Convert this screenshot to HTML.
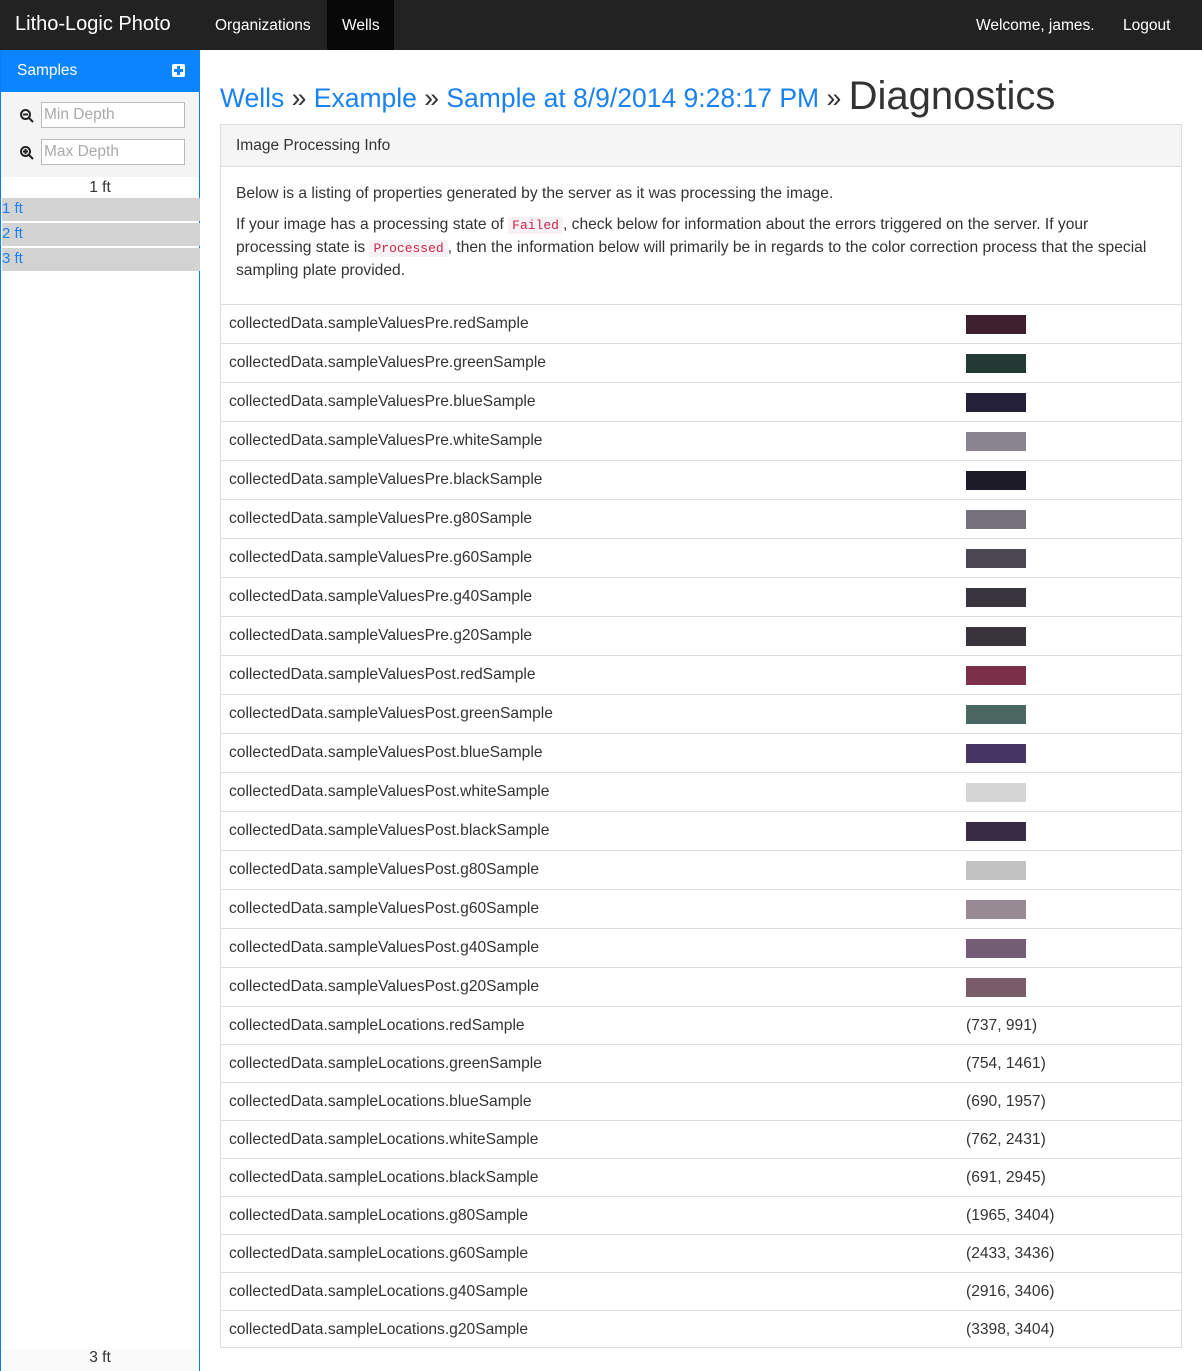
<!DOCTYPE html>
<html><head><meta charset="utf-8"><style>
*{box-sizing:border-box;margin:0;padding:0}
body{width:1202px;height:1371px;overflow:hidden;font-family:"Liberation Sans",sans-serif;color:#333;background:#fff;position:relative;font-size:15px}
.nav{position:absolute;left:0;top:0;width:1202px;height:50px;background:#222;color:#fff}
.nav span{position:absolute;top:17px;font-size:15.5px}
.side{position:absolute;left:0;top:50px;width:200px;height:1321px;border:1px solid #0a7cf5;border-top:none}
.sh{position:absolute;left:0;top:0;width:199px;height:42px;background:#0a84ff;color:#fff;font-size:15.5px}
.box{position:absolute;left:0;top:42px;width:198px;height:85px;background:#f4f4f4}
.inp{position:absolute;left:40px;width:144px;height:26px;border:1px solid #bbb;background:#fff;color:#aaa;font-size:15.5px;padding:3px 2px}
.it{position:absolute;left:1px;width:198px;height:23px;background:#d3d3d3;color:#1a82f0;font-size:15px;padding-top:2px}
.h1{position:absolute;left:220px;top:72px;font-size:26.5px;color:#1a82f0;white-space:nowrap}
.panel{position:absolute;left:220px;top:124px;width:962px;height:1224px;border:1px solid #ddd}
.ph{height:42px;background:#f5f5f5;border-bottom:1px solid #ddd;padding:12px 15px;font-size:15.5px}
.pb{padding:16px 15px;font-size:15.6px;line-height:22px}
code{font-family:"Liberation Mono",monospace;font-size:13px;color:#c7254e;background:#f9f2f4;padding:1px 4px}
.row{position:absolute;left:0;width:960px;border-top:1px solid #ddd;font-size:15.6px}
.row .k{position:absolute;left:8px;top:10px}
.row .v{position:absolute;left:745px;top:10px}
.row .sw{position:absolute;left:745px;top:10px;width:60px;height:19px}
</style></head><body>
<div class="nav">
<span style="left:15px;font-size:20px;top:13px">Litho-Logic Photo</span>
<span style="left:215px">Organizations</span>
<div style="position:absolute;left:327px;top:0;width:67px;height:50px;background:#080808"></div>
<span style="left:342px">Wells</span>
<span style="left:976px">Welcome, james.</span>
<span style="left:1123px">Logout</span>
</div>
<div class="side">
<div class="sh"><span style="position:absolute;left:16px;top:12px">Samples</span>
<div style="position:absolute;left:171px;top:14px;width:13px;height:13px;background:#fff;border-radius:2px"><div style="position:absolute;left:5px;top:2px;width:3px;height:9px;background:#0a84ff"></div><div style="position:absolute;left:2px;top:5px;width:9px;height:3px;background:#0a84ff"></div></div></div>
<div class="box">
<svg style="position:absolute;left:18px;top:16px" width="16" height="16" viewBox="0 0 16 16"><circle cx="6.5" cy="6.5" r="4.5" fill="none" stroke="#222" stroke-width="2"/><path d="M10 10l4 4M4 6.5h5" stroke="#222" stroke-width="2"/></svg>
<div class="inp" style="top:10px">Min Depth</div>
<svg style="position:absolute;left:18px;top:53px" width="16" height="16" viewBox="0 0 16 16"><circle cx="6.5" cy="6.5" r="4.5" fill="none" stroke="#222" stroke-width="2"/><path d="M10 10l4 4M4 6.5h5M6.5 4v5" stroke="#222" stroke-width="2"/></svg>
<div class="inp" style="top:47px">Max Depth</div>
</div>
<div style="position:absolute;left:0;top:129px;width:198px;text-align:center;font-size:15.5px">1 ft</div>
<div class="it" style="top:148px">1 ft</div>
<div class="it" style="top:173px">2 ft</div>
<div class="it" style="top:198px">3 ft</div>
<div style="position:absolute;left:0;top:1299px;width:198px;height:22px;background:#fafafa;text-align:center;font-size:15.5px">3 ft</div>
</div>
<div class="h1">Wells <span style="color:#333">»</span> Example <span style="color:#333">»</span> Sample at 8/9/2014 9:28:17 PM <span style="color:#333">»</span> <span style="color:#333;font-size:40px;position:relative;top:2px">Diagnostics</span></div>
<div class="panel">
<div class="ph">Image Processing Info</div>
<div class="pb"><p style="margin-bottom:9px">Below is a listing of properties generated by the server as it was processing the image.</p>
<p>If your image has a processing state of <code>Failed</code>, check below for information about the errors triggered on the server. If your<br>processing state is <code>Processed</code>, then the information below will primarily be in regards to the color correction process that the special sampling plate provided.</p></div>
<div class="row" style="top:179px;height:39px"><span class="k">collectedData.sampleValuesPre.redSample</span><div class="sw" style="background:#3d1f2e"></div></div>
<div class="row" style="top:218px;height:39px"><span class="k">collectedData.sampleValuesPre.greenSample</span><div class="sw" style="background:#233a34"></div></div>
<div class="row" style="top:257px;height:39px"><span class="k">collectedData.sampleValuesPre.blueSample</span><div class="sw" style="background:#25213a"></div></div>
<div class="row" style="top:296px;height:39px"><span class="k">collectedData.sampleValuesPre.whiteSample</span><div class="sw" style="background:#8a8490"></div></div>
<div class="row" style="top:335px;height:39px"><span class="k">collectedData.sampleValuesPre.blackSample</span><div class="sw" style="background:#1e1b29"></div></div>
<div class="row" style="top:374px;height:39px"><span class="k">collectedData.sampleValuesPre.g80Sample</span><div class="sw" style="background:#77717b"></div></div>
<div class="row" style="top:413px;height:39px"><span class="k">collectedData.sampleValuesPre.g60Sample</span><div class="sw" style="background:#4c4851"></div></div>
<div class="row" style="top:452px;height:39px"><span class="k">collectedData.sampleValuesPre.g40Sample</span><div class="sw" style="background:#38353f"></div></div>
<div class="row" style="top:491px;height:39px"><span class="k">collectedData.sampleValuesPre.g20Sample</span><div class="sw" style="background:#39343b"></div></div>
<div class="row" style="top:530px;height:39px"><span class="k">collectedData.sampleValuesPost.redSample</span><div class="sw" style="background:#7b2f48"></div></div>
<div class="row" style="top:569px;height:39px"><span class="k">collectedData.sampleValuesPost.greenSample</span><div class="sw" style="background:#4a6660"></div></div>
<div class="row" style="top:608px;height:39px"><span class="k">collectedData.sampleValuesPost.blueSample</span><div class="sw" style="background:#473566"></div></div>
<div class="row" style="top:647px;height:39px"><span class="k">collectedData.sampleValuesPost.whiteSample</span><div class="sw" style="background:#d5d5d5"></div></div>
<div class="row" style="top:686px;height:39px"><span class="k">collectedData.sampleValuesPost.blackSample</span><div class="sw" style="background:#372b45"></div></div>
<div class="row" style="top:725px;height:39px"><span class="k">collectedData.sampleValuesPost.g80Sample</span><div class="sw" style="background:#c2c2c2"></div></div>
<div class="row" style="top:764px;height:39px"><span class="k">collectedData.sampleValuesPost.g60Sample</span><div class="sw" style="background:#978a92"></div></div>
<div class="row" style="top:803px;height:39px"><span class="k">collectedData.sampleValuesPost.g40Sample</span><div class="sw" style="background:#725d75"></div></div>
<div class="row" style="top:842px;height:39px"><span class="k">collectedData.sampleValuesPost.g20Sample</span><div class="sw" style="background:#785c68"></div></div>
<div class="row" style="top:881px;height:38px"><span class="k">collectedData.sampleLocations.redSample</span><span class="v">(737, 991)</span></div>
<div class="row" style="top:919px;height:38px"><span class="k">collectedData.sampleLocations.greenSample</span><span class="v">(754, 1461)</span></div>
<div class="row" style="top:957px;height:38px"><span class="k">collectedData.sampleLocations.blueSample</span><span class="v">(690, 1957)</span></div>
<div class="row" style="top:995px;height:38px"><span class="k">collectedData.sampleLocations.whiteSample</span><span class="v">(762, 2431)</span></div>
<div class="row" style="top:1033px;height:38px"><span class="k">collectedData.sampleLocations.blackSample</span><span class="v">(691, 2945)</span></div>
<div class="row" style="top:1071px;height:38px"><span class="k">collectedData.sampleLocations.g80Sample</span><span class="v">(1965, 3404)</span></div>
<div class="row" style="top:1109px;height:38px"><span class="k">collectedData.sampleLocations.g60Sample</span><span class="v">(2433, 3436)</span></div>
<div class="row" style="top:1147px;height:38px"><span class="k">collectedData.sampleLocations.g40Sample</span><span class="v">(2916, 3406)</span></div>
<div class="row" style="top:1185px;height:38px"><span class="k">collectedData.sampleLocations.g20Sample</span><span class="v">(3398, 3404)</span></div>
</div>
</body></html>
